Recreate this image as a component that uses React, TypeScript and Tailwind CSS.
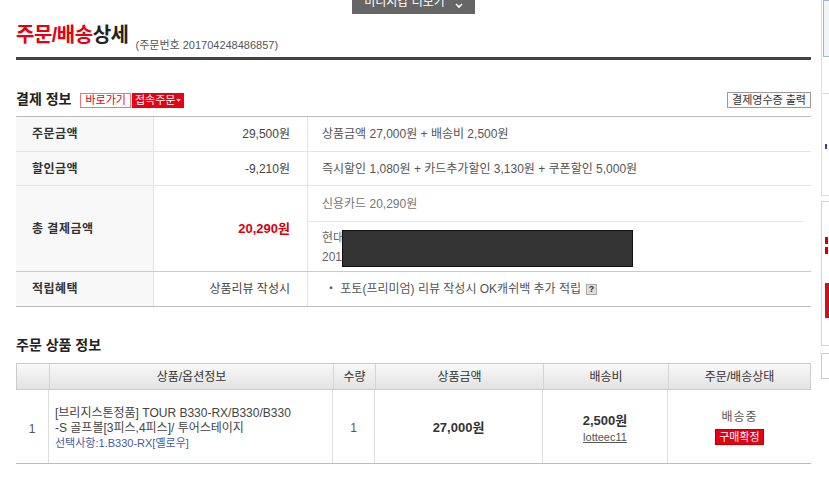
import React from "react";

function Label({ children }: { children: React.ReactNode }) {
  return (
    <div className="w-[138px] shrink-0 bg-[#f8f8f8] border-r border-[#e4e4e4] pl-[16px] flex items-center font-bold tracking-[0.5px] text-[#333]">
      {children}
    </div>
  );
}

function Value({ children, red }: { children: React.ReactNode; red?: boolean }) {
  return (
    <div
      className={
        red
          ? "w-[154px] shrink-0 border-r border-[#e4e4e4] pr-[17px] flex items-center justify-end font-bold text-[13px] text-[#d8000c]"
          : "w-[154px] shrink-0 border-r border-[#e4e4e4] pr-[17px] flex items-center justify-end text-[#444]"
      }
    >
      {children}
    </div>
  );
}

export default function App() {
  return (
    <div className="w-[829px] h-[477px] overflow-hidden bg-white flex text-[12px] text-[#333] font-['Liberation_Sans','Noto_Sans_CJK_KR',sans-serif]">
      {/* main column */}
      <div className="w-[811px] shrink-0 pl-[16px] flex flex-col">
        {/* top tab */}
        <div className="flex justify-center h-[14px]">
          <div className="w-[123px] h-[14px] bg-[#666] text-white overflow-hidden flex items-start justify-center gap-[10px]">
            <span className="-mt-[6px] leading-[16px] text-[12px]">미니지갑 더보기</span>
            <svg width="8" height="6" viewBox="0 0 8 6" className="mt-[3px]">
              <path d="M1 1 L4 4 L7 1" stroke="white" strokeWidth="1.6" fill="none" />
            </svg>
          </div>
        </div>

        {/* title */}
        <div className="mt-[7px] flex items-end h-[28px]">
          <span className="text-[20px] leading-[28px] font-bold tracking-[-0.5px]">
            <span className="text-[#e60012]">주문/배송</span>
            <span className="text-[#222]">상세</span>
          </span>
          <span className="ml-[7px] text-[11px] leading-[14px] -mb-[3px] text-[#555]">
            (주문번호 201704248486857)
          </span>
        </div>
        <div className="mt-[8px] h-[3px] bg-[#444]" />

        {/* 결제 정보 header */}
        <div className="mt-[32px] h-[16px] flex items-center">
          <span className="text-[14px] font-bold leading-[18px] text-[#222] -mt-[3px]">결제 정보</span>
          <span className="ml-[9px] h-[15px] px-[4px] border border-[#e77] text-[#e60012] text-[11px] leading-[13px] flex items-center">
            바로가기
          </span>
          <span className="ml-[1px] h-[15px] px-[3px] bg-[#e60012] text-white text-[11px] leading-[13px] flex items-center gap-[1px]">
            접속주문
            <svg width="5" height="3" viewBox="0 0 6 4">
              <path d="M0 0 L6 0 L3 4 Z" fill="white" />
            </svg>
          </span>
          <span className="ml-auto h-[16px] px-[4px] border border-[#999] bg-[#fafafa] text-[11px] leading-[14px] text-[#333] flex items-center">
            결제영수증 출력
          </span>
        </div>

        {/* payment table */}
        <div className="mt-[8px] border-t border-b border-[#bbb] flex flex-col">
          <div className="h-[35px] flex border-b border-[#e4e4e4]">
            <Label>주문금액</Label>
            <Value>29,500원</Value>
            <div className="flex-1 pl-[14px] flex items-center text-[#555]">
              상품금액 27,000원 + 배송비 2,500원
            </div>
          </div>
          <div className="h-[34px] flex border-b border-[#e4e4e4]">
            <Label>할인금액</Label>
            <Value>-9,210원</Value>
            <div className="flex-1 pl-[14px] flex items-center text-[#555]">
              즉시할인 1,080원 + 카드추가할인 3,130원 + 쿠폰할인 5,000원
            </div>
          </div>
          <div className="h-[86px] flex border-b border-[#ccc]">
            <Label>총 결제금액</Label>
            <Value red>20,290원</Value>
            <div className="flex-1 flex flex-col">
              <div className="h-[36px] mr-[8px] border-b border-[#e4e4e4] pl-[14px] flex items-center text-[#777]">
                신용카드 20,290원
              </div>
              <div className="flex-1 relative pl-[14px] pt-[7px] leading-[19px] text-[#666]">
                <div>현대카드</div>
                <div>2017</div>
                <div className="absolute left-[34px] top-[8px] w-[291px] h-[37px] bg-[#333] border border-[#111]" />
              </div>
            </div>
          </div>
          <div className="h-[34px] flex">
            <Label>적립혜택</Label>
            <Value>상품리뷰 작성시</Value>
            <div className="flex-1 pl-[17px] flex items-center text-[#555]">
              <span>・ 포토(프리미엄) 리뷰 작성시 OK캐쉬백 추가 적립</span>
              <span className="ml-[5px] w-[11px] h-[11px] bg-[#ddd] border border-[#aaa] text-[9px] leading-[9px] font-bold text-[#333] flex items-center justify-center">
                ?
              </span>
            </div>
          </div>
        </div>

        {/* 주문 상품 정보 */}
        <div className="mt-[29px] text-[14px] font-bold leading-[18px] text-[#222]">주문 상품 정보</div>

        <div className="mt-[9px] flex flex-col">
          <div className="h-[27px] flex border border-[#ccc] bg-linear-to-b from-[#f8f8f8] to-[#e3e3e3] text-[#333]">
            <div className="w-[33px] shrink-0 border-r border-[#d4d4d4]" />
            <div className="w-[284px] shrink-0 border-r border-[#d4d4d4] flex items-center justify-center">상품/옵션정보</div>
            <div className="w-[42px] shrink-0 border-r border-[#d4d4d4] flex items-center justify-center">수량</div>
            <div className="w-[168px] shrink-0 border-r border-[#d4d4d4] flex items-center justify-center">상품금액</div>
            <div className="w-[125px] shrink-0 border-r border-[#d4d4d4] flex items-center justify-center">배송비</div>
            <div className="flex-1 flex items-center justify-center">주문/배송상태</div>
          </div>
          <div className="h-[74px] flex border-b border-[#bbb]">
            <div className="w-[33px] shrink-0 border-r border-[#ddd] flex items-center justify-center pt-[4px] text-[#555]">1</div>
            <div className="w-[284px] shrink-0 border-r border-[#ddd] pl-[6px] pt-[3px] flex flex-col justify-center leading-[15px] whitespace-nowrap text-[#444]">
              <div>[브리지스톤정품] TOUR B330-RX/B330/B330</div>
              <div>-S 골프볼[3피스,4피스]/ 투어스테이지</div>
              <div className="text-[11px] text-[#4a5aa8]">선택사항:1.B330-RX[옐로우]</div>
            </div>
            <div className="w-[42px] shrink-0 border-r border-[#ddd] flex items-center justify-center pt-[3px] text-[#555]">1</div>
            <div className="w-[168px] shrink-0 border-r border-[#ddd] flex items-center justify-center pt-[3px] font-bold text-[13px] text-[#333]">27,000원</div>
            <div className="w-[125px] shrink-0 border-r border-[#ddd] flex flex-col items-center justify-center pt-[5px]">
              <div className="font-bold text-[13px] leading-[16px] text-[#333]">2,500원</div>
              <div className="underline text-[11px] leading-[16px] text-[#555]">lotteec11</div>
            </div>
            <div className="flex-1 flex flex-col items-center justify-center pt-[1px]">
              <div className="leading-[16px] text-[#555] tracking-[1px]">배송중</div>
              <div className="mt-[4px] h-[16px] w-[49px] bg-[#e60012] border border-[#b00] text-white text-[11px] leading-[14px] flex items-center justify-center">
                구매확정
              </div>
            </div>
          </div>
        </div>
      </div>

      {/* right sidebar (cut off) */}
      <div className="ml-[10px] w-[40px] shrink-0 flex flex-col">
        <div className="h-[196px] border-l border-b border-[#ddd] flex flex-col">
          <div className="h-[57px] ml-[1px] border border-[#a9b6c8] bg-[#f1f4f8]" />
          <div className="h-[36px]" />
          <div className="border-t border-[#ddd]" />
          <div className="mt-[50px] ml-[3px] w-[2px] h-[5px] bg-[#334488]" />
        </div>
        <div className="mt-[5px] h-[145px] border border-[#e6cccc] pl-[3px] pt-[35px]">
          <div className="w-[3px] h-[7px] bg-[#c00]" />
          <div className="mt-[3px] w-[3px] h-[7px] bg-[#c00]" />
          <div className="mt-[29px] h-[35px] bg-[#c8151b]" />
        </div>
        <div className="mt-[7px] h-[26px] border border-[#ccc]" />
      </div>
    </div>
  );
}
